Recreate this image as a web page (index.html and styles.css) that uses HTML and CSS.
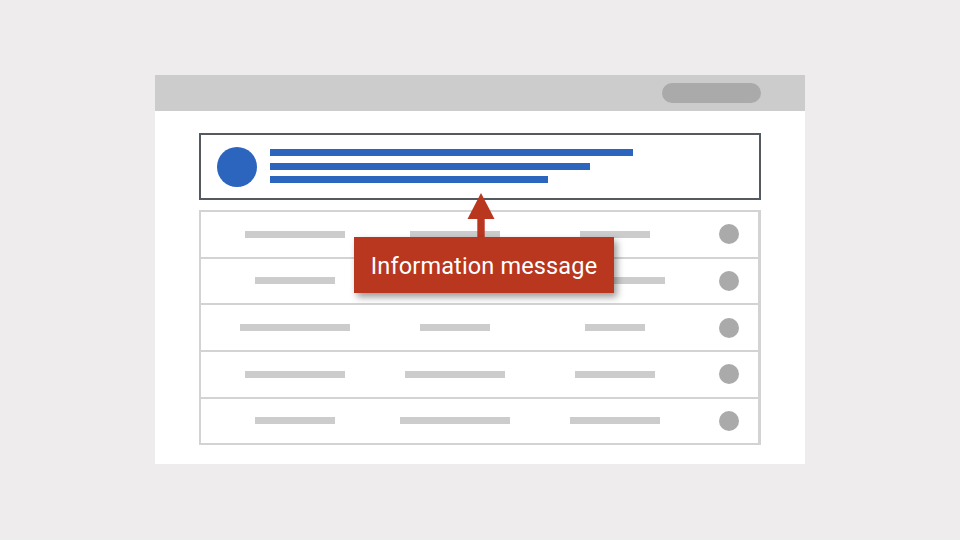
FILE: index.html
```html
<html lang="en">
  <head>
    <meta charset="UTF-8" />
    <meta name="viewport" content="width=device-width, initial-scale=1.0" />
    <title>Information message</title>
    <link rel="stylesheet" href="styles.css">
  </head>
  <body>
    <!-- Browser window -->
    <div class="window">
      <div class="window-bar">
        <span class="window-pill"></span>
      </div>

      <div class="window-body">
        <!-- Message card -->
        <div class="card">
          <span class="card-avatar"></span>
          <div class="card-lines">
            <span class="card-line line-1"></span>
            <span class="card-line line-2"></span>
            <span class="card-line line-3"></span>
          </div>
        </div>

        <!-- Table rows -->
        <div class="table">
          <div class="row">
            <span class="cell" style="width: 100px"></span>
            <span class="cell" style="width: 90px"></span>
            <span class="cell" style="width: 70px"></span>
            <span class="dot"></span>
          </div>
          <div class="row">
            <span class="cell" style="width: 80px"></span>
            <span class="cell" style="width: 100px"></span>
            <span class="cell" style="width: 100px"></span>
            <span class="dot"></span>
          </div>
          <div class="row">
            <span class="cell" style="width: 110px"></span>
            <span class="cell" style="width: 70px"></span>
            <span class="cell" style="width: 60px"></span>
            <span class="dot"></span>
          </div>
          <div class="row">
            <span class="cell" style="width: 100px"></span>
            <span class="cell" style="width: 100px"></span>
            <span class="cell" style="width: 80px"></span>
            <span class="dot"></span>
          </div>
          <div class="row">
            <span class="cell" style="width: 80px"></span>
            <span class="cell" style="width: 110px"></span>
            <span class="cell" style="width: 90px"></span>
            <span class="dot"></span>
          </div>
        </div>

        <!-- Tooltip pointing at the card -->
        <div class="tooltip">
          <svg class="tooltip-arrow" width="28" height="44" viewBox="0 0 28 44">
            <polygon points="14,0 27.5,26 0.5,26" fill="#b9361f" />
            <rect x="10.3" y="25" width="7.4" height="19" fill="#b9361f" />
          </svg>
          <div class="tooltip-box">Information message</div>
        </div>
      </div>
    </div>
  </body>
</html>
```

FILE: styles.css
```css
body {
  margin: 0;
  padding: 75px 0 0 155px;
  background-color: #eeeced;
  font-family: Roboto, "Liberation Sans", Arial, sans-serif;
  height: 540px;
  box-sizing: border-box;
}
.window {
  width: 650px;
  height: 389px;
  background-color: white;
  display: flex;
  flex-direction: column;
}
.window-bar {
  height: 36px;
  background-color: #cccccc;
  display: flex;
  align-items: center;
  justify-content: flex-end;
  padding-right: 44px;
}
.window-pill {
  width: 99px;
  height: 20px;
  border-radius: 10px;
  background-color: #aaaaaa;
  margin-top: -1px;
}
.window-body {
  position: relative;
  padding: 22px 44px 0 44px;
}
.card {
  height: 67px;
  border: 2px solid #555a60;
  box-sizing: border-box;
  display: flex;
  align-items: center;
  padding-left: 16px;
}
.card-avatar {
  width: 40px;
  height: 40px;
  border-radius: 50%;
  background-color: #2b65be;
}
.card-lines {
  display: flex;
  flex-direction: column;
  gap: 6.5px;
  margin-left: 13px;
  padding-bottom: 1px;
}
.card-line {
  display: block;
  height: 7px;
  background-color: #2b65be;
}
.line-1 {
  width: 363px;
}
.line-2 {
  width: 320px;
}
.line-3 {
  width: 278px;
}
.table {
  margin-top: 10px;
  border: 2px solid #d3d3d3;
  border-right-width: 3px;
}
.row {
  height: 44.67px;
  display: grid;
  grid-template-columns: 160px 160px 160px 1fr;
  align-items: center;
  justify-items: center;
  padding: 0 19px 0 14px;
  border-bottom: 2px solid #d3d3d3;
}
.row:last-child {
  border-bottom: none;
}
.cell {
  display: block;
  height: 7px;
  background-color: #cccccc;
}
.dot {
  justify-self: end;
  width: 20px;
  height: 20px;
  border-radius: 50%;
  background-color: #aaaaaa;
}
.tooltip {
  position: absolute;
  left: 199px;
  top: 82px;
  display: flex;
  flex-direction: column;
}
.tooltip-arrow {
  display: block;
  margin-left: 112.5px;
}
.tooltip-box {
  width: 260px;
  height: 56px;
  background-color: #b9361f;
  color: white;
  font-size: 23.5px;
  letter-spacing: 0.15px;
  display: flex;
  align-items: center;
  justify-content: center;
  box-shadow: 3px 4px 7px rgba(0, 0, 0, 0.4);
  padding-top: 1px;
  box-sizing: border-box;
}
```
